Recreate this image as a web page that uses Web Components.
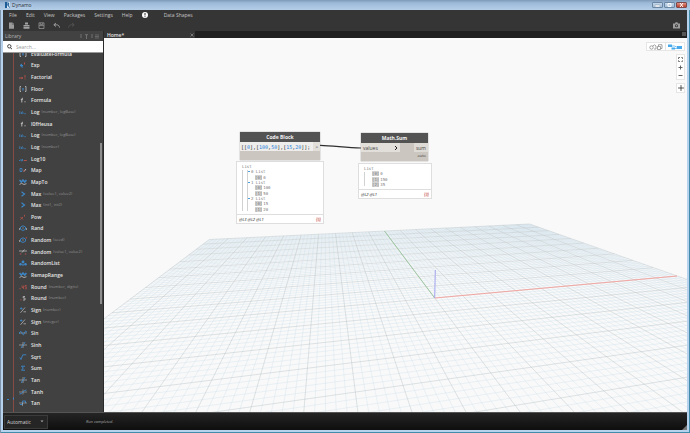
<!DOCTYPE html>
<html lang="en">
<head>
<meta charset="utf-8">
<title>Dynamo</title>
<style>
html, body { margin: 0; height: 100%; }
body { display: flex; font: 5px/8px "Open Sans", "Noto Sans", sans-serif; color: #ddd; overflow: hidden; }
</style>
</head>
<body>
<dyn-window></dyn-window>
<script>
const RESET = `
  *, *::before, *::after { box-sizing: border-box; }
  button, input, select { font: inherit; color: inherit; background: none; border: 0; padding: 0; margin: 0; border-radius: 0; outline: none; }
  button { display: flex; align-items: center; justify-content: center; }
  svg { display: block; }
`;
function define(name, render) {
  customElements.define(name, class extends HTMLElement {
    connectedCallback() {
      if (this.shadowRoot) return;
      const root = this.attachShadow({ mode: 'open' });
      const t = document.createElement('template');
      const out = render(this);
      t.innerHTML = `<style>${RESET}${out[0]}</style>${out[1]}`;
      root.append(t.content.cloneNode(true));
    }
  });
}

/* ---------- title bar ---------- */
define('dyn-titlebar', () => [`
  :host { display: flex; align-items: center; height: 10px; padding: 0 3px 0 5px; gap: 2px; color: #1c2733;
          background: linear-gradient(#7f9ab8, #9dbad9 30%, #b4cee8); }
  .name { flex: 1; text-shadow: 0 0 3px #e6f1fb; }
  .controls { display: flex; gap: 1px; }
  .controls button { width: 11px; height: 6px; border: 1px solid #6b86a3; border-radius: 1px; background: linear-gradient(#c6d9ec, #9fb9d4); }
  .controls .close { background: linear-gradient(#dd9183, #bd3f2b); border-color: #7d4a4c; }
`, `
  <svg width="5" height="6" viewBox="0 0 5 6"><path d="M0 0h5v6H0z" fill="#d4e4f3"/><path d="M0 0h2v6H0z" fill="#1d5c96"/><path d="M2 1h1.6v1.8H2M3 3l1.5 2.6" fill="none" stroke="#1d5c96"/></svg>
  <span class="name">Dynamo</span>
  <div class="controls">
    <button aria-label="Minimize"><svg width="5" height="4"><path d="M0 2h5v2H0z" fill="#fff" stroke="#64798e" stroke-width=".4"/></svg></button>
    <button aria-label="Maximize"><svg width="5" height="4"><path d="M1 .6h3v2.8H1z" fill="none" stroke="#fff"/></svg></button>
    <button class="close" aria-label="Close"><svg width="5" height="4"><path d="M1 0l3 4M4 0L1 4" stroke="#fff"/></svg></button>
  </div>`]);

/* ---------- menu ---------- */
define('dyn-menubar', () => [`
  :host { display: flex; align-items: center; height: 9px; padding-left: 6px; gap: 9px; color: #c4c4c4; background: #353535; }
  .info { width: 6px; height: 6px; border-radius: 50%; background: #fff; }
  .extra { margin-left: 7px; }
`, `
  <button>File</button><button>Edit</button><button>View</button><button>Packages</button><button>Settings</button><button>Help</button>
  <button class="info" aria-label="Notifications"><svg width="6" height="6"><path d="M3 1v2.5M3 4.2v.9" stroke="#333"/></svg></button>
  <button class="extra">Data Shapes</button>`]);

/* ---------- toolbar ---------- */
define('dyn-toolbar', () => [`
  :host { display: flex; align-items: center; height: 12px; padding: 0 6px 0 5px; gap: 8px; background: #353535; }
  button { width: 7px; height: 8px; }
  .shot { margin-left: auto; width: 9px; }
`, `
  <button aria-label="New"><svg width="7" height="7"><path d="M1 .5h3.5L6 2v4.8H1z" fill="#9b9b9b"/><path d="M4.3.5v2H6" fill="none" stroke="#555" stroke-width=".5"/></svg></button>
  <button aria-label="Open"><svg width="7" height="7"><path d="M2 .5h3v2H2zM.5 3h6v1.4h-6zM.5 5h6v1.7h-6z" fill="#a2a2a2"/></svg></button>
  <button aria-label="Save"><svg width="7" height="7"><path d="M1 .8h5v5.7H1zM1 3.6h5M2.3 1v1.6h2.4V1" fill="none" stroke="#929292" stroke-width=".8"/></svg></button>
  <button aria-label="Undo"><svg width="7" height="7"><path d="M3 1L.8 2.8 3 4.5M1 2.8h2.6c1.8 0 2.6 1 2.9 2.8" fill="none" stroke="#a5a5a5" stroke-width=".9"/></svg></button>
  <button aria-label="Redo"><svg width="7" height="7"><path d="M4 1l2.2 1.8L4 4.5M6 2.8H3.4C1.6 2.8.8 3.8.5 5.6" fill="none" stroke="#555" stroke-width=".9"/></svg></button>
  <button class="shot" aria-label="Export image"><svg width="9" height="7"><path d="M1 1.5h2l.6-1.2h1.8l.6 1.2h2v5H1z" fill="#9d9d9d"/><circle cx="4.500" cy="3.800" r="1.500" fill="#353535"/><circle cx="4.500" cy="3.800" r=".7" fill="#9d9d9d"/></svg></button>`]);

/* ---------- library ---------- */
const B = '#3d86c6', R = '#b2524a', W = '#c3c3c3';
const p = (d, c, w = .8) => `<path d="${d}" fill="none" stroke="${c}" stroke-width="${w}"/>`;
const ICONS = {
  bracket: p('M2 .5H1v5h1M6 .5h1v5H6', W) + p('M4 2v2.500', B, 1.2),
  exp: p('M1.500 3.500h2.500M1.500 3.500q0-1.500 1.500-1.200M1.500 3.500q.5 2 2.500 1.500', B, 1) + p('M5.500.5v2', R, 1),
  fact: p('M1 5V3M3 5V3M2 4h2', R, 1) + p('M6 1v2.800M6 4.500v1', R, .9),
  fx: p('M4 1.200Q2.800.8 2.800 2.500V5.500M1.800 2.600h2', W, .9) + p('M5.500 4.800h1', W, 1),
  ln: p('M.8 2.200v2.800M2.500 5V3.300q1.400-1.200 1.400.3V5', B, .8) + p('M5.300 4.700h1.500', B, .8),
  log10: p('M0 4.500h1.200M2 3v1.800h1.500V3', B) + p('M4.800 4.500h3', R, 1),
  map: p('M1 1.500h2v3H1z', B) + p('M5 4.500l2-2.500', W, 1) + p('M5 2.500v2.500', R),
  wave: p('M.5 1l1.800 2L4 1l1.800 2L7.500 1', B, 1.5) + p('M.5 5.500l2-1.200L5 5.500l2.500-.8', W, .8),
  gt: p('M2.500.8L5.500 3 2.500 5.200', B, 1.2),
  pow: p('M1.500 3l2.500 2.500M4 3L1.500 5.500', R, .9) + p('M5.500.8v1.800', R, .9),
  rand: p('M4 .8L6.500 2v2.300L4 5.500 1.500 4.300V2z', B, .9) + p('M4 2.500v1M.3 3v2M7.700 3v2', W, .8),
  randseed: p('M4 .8L6.500 2v2.300L4 5.500 1.500 4.300V2z', B, .9) + p('M4 2.500v1M.3 3v2', W, .8) + p('M7.300 0v1.500', R, 1),
  cross: p('M0 2h8', W, .7) + p('M3 3.500L5.500.5', W) + p('M.8 5h1.500M5.800 5h1.500', R, 1.2),
  cluster: `<g fill="${B}"><circle cx="1.500" cy="4.300" r="1.300"/><circle cx="4" cy="2" r="1.400"/><circle cx="6.500" cy="4.300" r="1.300"/><circle cx="4" cy="4.800" r=".9"/></g>`,
  round: p('M.5 4.800h1.200', R, 1) + p('M3 1.500v2h1.500M4.400 1.500v3.500M7.700 1.500H6v1.500h1.700v1.800H5.800', R, .8),
  round5: p('M1.500 4.800h1', R, 1) + p('M6 1.500H4.200v1.500H6v2H4', W, .8),
  sign: p('M1 1.500h2.500M2.200.3v2.400', B) + p('M1.500 5.800L6 .5M4.500 4.800H7', W, .7),
  sin: p('M0 3h8', W, .5) + p('M0 4Q1.500-.5 3 3t2.500 0T8 2.500', B, 1),
  sinh: p('M0 3h8M4 0v6', W, .6) + p('M2.500 6Q3 3 4 3T6 0', B, .9),
  sqrt: p('M.8 3.500L2 5.500 3.800.8h3.500', B, .9),
  sum: p('M6 1.200H2.500L4.300 3 2.500 5.200H6', B, 1),
  tanh: p('M0 3h8M4 .5v5', W, .5) + p('M.5 5Q3 5 4 3t3.500-2', B, .9),
  tan: p('M1 4.500h2.500V1h3v2', B, .9) + p('M0 3h8M3.500 3v3', W, .5)
};
const ITEMS = [
  ['bracket', 'EvaluateFormula'], ['exp', 'Exp'], ['fact', 'Factorial'], ['bracket', 'Floor'], ['fx', 'Formula'],
  ['ln', 'Log', '(number, logBase)'], ['fx', 'I0fHeusa'], ['ln', 'Log', '(number, logBase)'], ['ln', 'Log', '(number)'],
  ['log10', 'Log10'], ['map', 'Map'], ['wave', 'MapTo'], ['gt', 'Max', '(value1, value2)'], ['gt', 'Max', '(int1, int2)'],
  ['pow', 'Pow'], ['rand', 'Rand'], ['randseed', 'Random', '(seed)'], ['cross', 'Random', '(value1, value2)'],
  ['cluster', 'RandomList'], ['wave', 'RemapRange'], ['round', 'Round', '(number, digits)'], ['round5', 'Round', '(number)'],
  ['sign', 'Sign', '(number)'], ['sign', 'Sign', '(integer)'], ['sin', 'Sin'], ['sinh', 'Sinh'], ['sqrt', 'Sqrt'],
  ['sum', 'Sum'], ['sinh', 'Tan'], ['tanh', 'Tanh'], ['tan', 'Tan']
];
define('dyn-library-item', el => [`
  :host { display: flex; align-items: center; min-height: 0; }
  button { gap: 4px; height: 8px; color: #e6e6e6; font-weight: 600; white-space: nowrap; }
  .args { font-size: 4px; font-weight: 400; color: #909090; margin-left: -2px; }
`, `<button><svg width="8" height="6" viewBox="0 0 8 6">${ICONS[el.getAttribute('icon')]}</svg><span><slot></slot></span>${el.hasAttribute('args') ? `<span class="args">${el.getAttribute('args')}</span>` : ''}</button>`]);

define('dyn-library', () => [`
  :host { display: flex; flex-direction: column; width: 101px; flex: none; min-height: 0; background: #414141; border-right: 1px solid #292929; }
  header { display: flex; align-items: center; height: 10px; padding: 0 4px 0 2px; color: #b5b5b5; background: #424242; }
  header span { flex: 1; }
  label { display: flex; align-items: center; gap: 4px; height: 12px; padding: 0 4px; background: #fff; border-bottom: 1px solid #999; }
  input { flex: 1; min-width: 0; color: #333; }
  input::placeholder { color: #999; opacity: 1; }
  .view { position: relative; flex: 1; min-height: 0; display: flex; overflow: hidden; }
  nav { flex: 1; display: grid; grid-auto-rows: 1fr; margin: -5px 0 0 10px; padding: 0 0 3px 5px; border-left: 1px solid #874b46; }
  .thumb { position: absolute; right: 1px; top: 25%; height: 45%; width: 2px; background: #8d8d8d; }
  .mark { position: absolute; left: 4px; bottom: 11px; }
`, `
  <header><span>Library</span><svg width="19" height="5"><path d="M1 0v4M6.500 1v4M5 .7h3M12 0v4" stroke="#777" stroke-width=".9"/><path d="M15 1h4M15 2.500h4M15 4h4" stroke="#707070" stroke-width=".8"/></svg></header>
  <label><svg width="5" height="6"><circle cx="2.300" cy="2.300" r="1.700" fill="none" stroke="#333" stroke-width=".9"/><path d="M3.500 3.600L5 5.400" stroke="#333"/></svg><input type="text" placeholder="Search..." aria-label="Search"></label>
  <div class="view">
    <nav>${ITEMS.map(i => `<dyn-library-item icon="${i[0]}"${i[2] ? ` args="${i[2]}"` : ''}>${i[1]}</dyn-library-item>`).join('')}</nav>
    <div class="thumb"></div>
    <svg class="mark" width="8" height="4"><path d="M0 2.500h2M6.500.5v2" stroke="#3d86c6"/></svg>
  </div>`]);

/* ---------- perspective ground grid ---------- */
function gridPaths() {
  const depth = (x, y) => 1 + .01743 * x + .0848 * y;
  const at = (x, y) => {
    const w = depth(x, y);
    const sx = (330.7 + 34.22 * x + 18.77 * y) / w;
    const sy = (260 + 1.95 * x + 9.67 * y) / w;
    return sx.toFixed(1) + ' ' + sy.toFixed(1);
  };
  const line = (a, b) => {
    const wa = depth(...a), wb = depth(...b), near = .12;
    const cut = (s, e, ws, we) => { const t = (near - ws) / (we - ws); return [s[0] + (e[0] - s[0]) * t, s[1] + (e[1] - s[1]) * t]; };
    if (wa < near && wb < near) return '';
    if (wa < near) a = cut(a, b, wa, wb); else if (wb < near) b = cut(b, a, wb, wa);
    return `M${at(...a)}L${at(...b)}`;
  };
  let major = '', minor = '';
  for (let i = -50; i <= 50; i++) {
    const d = line([i / 5, 10], [i / 5, -10]) + line([-10, i / 5], [10, i / 5]);
    if (i % 5) minor += d; else major += d;
  }
  return `<path d="${minor}" stroke="#c3dae8" stroke-width=".5" opacity=".6"/><path d="${major}" stroke="#a9b7bc" stroke-width=".6" opacity=".6"/>
    <path d="M${at(0, 0)}L${at(10, 0)}" stroke="#f5a09c" stroke-width=".9"/><path d="M${at(0, 0)}L${at(0, 10)}" stroke="#8fc090" stroke-width=".8"/>
    <path d="M330.700 260L331.300 232" stroke="#a3a3ee" stroke-width="1"/>`;
}
define('dyn-ground', () => [`
  :host { display: block; overflow: hidden; }
  svg { width: 100%; height: 100%; }
`, `<svg viewBox="0 0 583 374" preserveAspectRatio="xMinYMin slice" fill="none">${gridPaths()}
    <path d="M216 107.300C230 107.500 242 110 257 110" stroke="#2f2f2f" stroke-width="1.200"/></svg>`]);

/* ---------- graph nodes ---------- */
define('dyn-node', el => [`
  :host { display: flex; flex-direction: column; color: #4a4a4a; background: #cbc6bf; box-shadow: 0 0 1px #777; }
  h2 { margin: 0; height: 10px; display: flex; align-items: center; justify-content: center; font-size: 5px; font-weight: 700; color: #f2f2f2; background: #535353; }
  .ports { display: flex; justify-content: space-between; height: 9px; }
`, `<h2>${el.getAttribute('title-text')}</h2><div class="ports"><slot></slot></div><slot name="foot"></slot>`]);

define('dyn-port', () => [`
  :host { display: flex; align-items: center; padding: 0 2px; background: #e2dfdb; color: #444; }
`, `<slot></slot>`]);

define('dyn-code', () => [`
  :host { display: flex; align-items: center; padding-left: 1px; flex: 1; background: #eeedeb; color: #222; font: 5px/8px "DejaVu Sans Mono", monospace; white-space: pre; }
  b { font-weight: 400; color: #1f7fdc; }
`, `<span>[[<b>0</b>],[<b>100</b>,<b>50</b>],[<b>15</b>,<b>20</b>]];</span>`]);

define('dyn-preview', el => {
  const rows = JSON.parse(el.getAttribute('rows'));
  return [`
  :host { display: flex; flex-direction: column; background: #fff; border: 1px solid #dedede; font: 4px/5px "DejaVu Sans Mono", monospace; color: #777; }
  .tree { position: relative; flex: 1; display: grid; }
  ul { margin: 0; padding: 2px 5px; list-style: none; display: grid; grid-auto-rows: 1fr; }
  li { display: flex; align-items: center; gap: 1px; }
  .d1 { padding-left: 6px; } .d2 { padding-left: 13px; } .leaf .d1 { padding-left: 8px; }
  i { font-style: normal; background: #d2d2d2; color: #777; }
  .tri { width: 2px; height: 1px; background: #4a9fdc; }
  .rail { position: absolute; left: 5px; top: 8px; bottom: 3px; border-left: 1px solid #d2d2d2; }
  .rail + .rail { left: 10px; }
  footer { display: flex; align-items: center; justify-content: space-between; height: 9px; padding: 0 2px; border-top: 1px solid #dedede; color: #222; font-family: "Open Sans", sans-serif; font-style: italic; }
  footer em { color: #c0524d; background: #f7e4e2; }
  `, `<div class="tree"><ul class="${el.hasAttribute('flat') ? 'leaf' : ''}">
    ${rows.map(([d, a, b]) => `<li class="d${d}">${b === undefined ? a : b === 'List' ? `<span class="tri"></span><span>${a} List</span>` : `<i>[${a}]</i><span>${b}</span>`}</li>`).join('')}</ul>
    <div class="rail"></div>${el.hasAttribute('flat') ? '' : '<div class="rail"></div>'}</div>
    <footer><span>${el.getAttribute('levels')}</span><em>{${el.getAttribute('count')}}</em></footer>`];
});

/* ---------- workspace ---------- */
define('dyn-workspace', () => [`
  :host { flex: 1; min-width: 0; min-height: 0; position: relative; display: grid; background: #f9f9f9; overflow: hidden; }
  dyn-ground { min-height: 0; min-width: 0; }
  dyn-node, dyn-preview { position: absolute; }
  .code { left: 136px; top: 94px; width: 80px; height: 28px; }
  .code-out { left: 132px; top: 123px; width: 88px; height: 63px; }
  .sum { left: 257px; top: 95px; width: 67px; height: 28px; }
  .sum-out { left: 254px; top: 125px; width: 74px; height: 36px; }
  .values { width: 39px; justify-content: space-between; }
  .out { background: #dedad5; }
  .auto { align-self: flex-end; padding-right: 2px; font: 4px/8px "Open Sans", sans-serif; color: #444; }
  .tools { position: absolute; right: 2px; top: 4px; display: flex; flex-direction: column; align-items: flex-end; gap: 3px; }
  .tools div { display: flex; background: #fff; border: 1px solid #e6e6e6; }
  .modes button { width: 18px; height: 7px; }
  .modes button + button { width: 19px; border-left: 1px solid #e3e3e3; }
  .zoom { flex-direction: column; }
  .zoom button { width: 7px; height: 8px; }
`, `
  <dyn-ground></dyn-ground>
  <dyn-node class="code" title-text="Code Block"><dyn-code></dyn-code><dyn-port>&gt;</dyn-port></dyn-node>
  <dyn-preview class="code-out" count="5" levels="@L3 @L2 @L1" rows='[[0,"List"],[1,0,"List"],[2,0,0],[1,1,"List"],[2,0,100],[2,1,50],[1,2,"List"],[2,0,15],[2,1,20]]'></dyn-preview>
  <dyn-node class="sum" title-text="Math.Sum"><dyn-port class="values"><span>values</span><svg width="4" height="6"><path d="M1 1l2 2-2 2" fill="none" stroke="#222"/></svg></dyn-port><dyn-port class="out">sum</dyn-port><span slot="foot" class="auto">auto</span></dyn-node>
  <dyn-preview class="sum-out" flat count="3" levels="@L2 @L1" rows='[[0,"List"],[1,0,0],[1,1,150],[1,2,35]]'></dyn-preview>
  <div class="tools">
    <div class="modes">
      <button aria-label="Background preview"><svg width="14" height="6"><circle cx="2.500" cy="3.500" r="1.700" fill="none" stroke="#8d8d8d" stroke-width=".8"/><path d="M3.500 2.200L5.500.800 7 2v3H5M8.500 2.500h3v3h-3zM9.500 2.500V.700h3.500v3.800h-1.500" fill="none" stroke="#8d8d8d" stroke-width=".8"/></svg></button>
      <button aria-label="Graph view"><svg width="14" height="6"><path d="M0 .5h4v2.500H0zM3.500 3.500h3.500v2H3.500zM9 2h5v3H9z" fill="#47a9ec"/><path d="M4 2h2.500l3 1.500M7 4.500h2" fill="none" stroke="#47a9ec" stroke-width=".7"/></svg></button>
    </div>
    <div class="zoom">
      <button aria-label="Fit"><svg width="5" height="5"><path d="M.5 2V.5H2M3.300.5h1.300V2M4.600 3.300v1.300H3.300M2 4.600H.5V3.300" fill="none" stroke="#666" stroke-width=".9"/></svg></button>
      <button aria-label="Zoom in"><svg width="5" height="5"><path d="M.5 2.500h4M2.500.5v4" stroke="#555" stroke-width=".9"/></svg></button>
      <button aria-label="Zoom out"><svg width="5" height="5"><path d="M.5 2.500h4" stroke="#555" stroke-width=".9"/></svg></button>
    </div>
    <div class="zoom"><button aria-label="Pan"><svg width="6" height="6"><path d="M0 3h6M3 0v6" stroke="#555" stroke-width=".9"/><path d="M3 1.500L4.500 3 3 4.500 1.500 3z" fill="#777"/></svg></button></div>
  </div>`]);

define('dyn-tabs', () => [`
  :host { display: flex; height: 7px; background: #202020; justify-content: space-between; align-items: stretch; }
  .tab { display: flex; justify-content: space-between; align-items: center; width: 91px; padding: 0 1px 0 3px; background: #363636; color: #e4e4e4; font-weight: 600; }
  .tab button { width: 5px; height: 5px; }
  .list { width: 4px; height: 4px; margin: 1px 1px; background: #555; }
`, `<div class="tab"><span>Home*</span><button aria-label="Close tab"><svg width="4" height="4"><path d="M.5.5l3 3M3.500.5l-3 3" stroke="#929292" stroke-width=".7"/></svg></button></div><button class="list" aria-label="All tabs"></button>`]);

define('dyn-runbar', () => [`
  :host { display: flex; align-items: center; height: 18px; background: linear-gradient(#242424, #0e0e0e); border-top: 1px solid #555; }
  .mode { display: flex; align-items: center; width: 44px; height: 14px; margin-left: 1px; padding: 0 3px 0 2px; background: #252525; border: 1px solid #3b3b3b; }
  select { flex: 1; min-width: 0; appearance: none; color: #d6d6d6; height: 10px; }
  .status { margin-left: 38px; font-size: 4px; color: #a8a8a8; font-style: italic; }
  .grip { margin: auto 0 0 auto; }
`, `<label class="mode"><select aria-label="Run mode"><option>Automatic</option><option>Manual</option></select><svg width="4" height="3"><path d="M.5.5h3L2 2.300z" fill="#aaa"/></svg></label>
  <span class="status">Run completed.</span>
  <svg class="grip" width="5" height="5"><path d="M5 0v5H0z" fill="#777"/></svg>`]);

define('dyn-window', () => [`
  :host { flex: 1; min-width: 0; display: flex; flex-direction: column; background: #b7d2ec; box-shadow: inset 1px 0 #7d94aa, inset -1px -1px #428caa; }
  .body { flex: 1; min-height: 0; margin: 0 3px 3px; display: flex; flex-direction: column; }
  .main { flex: 1; min-height: 0; display: flex; }
  .stage { flex: 1; min-width: 0; display: flex; flex-direction: column; }
`, `
  <dyn-titlebar></dyn-titlebar>
  <div class="body">
    <dyn-menubar></dyn-menubar>
    <dyn-toolbar></dyn-toolbar>
    <div class="main"><dyn-library></dyn-library><div class="stage"><dyn-tabs></dyn-tabs><dyn-workspace></dyn-workspace></div></div>
    <dyn-runbar></dyn-runbar>
  </div>`]);
</script>
</body>
</html>
